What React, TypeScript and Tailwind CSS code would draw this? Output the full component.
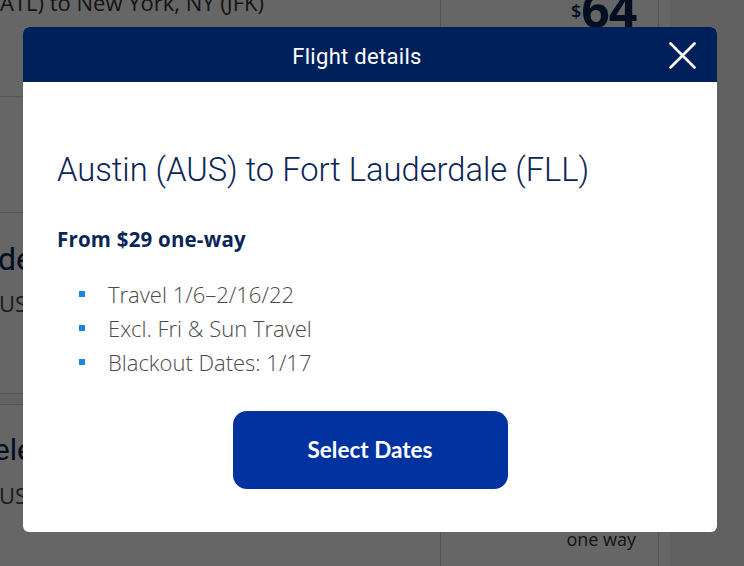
import React from "react";

const bullets = ["Travel 1/6–2/16/22", "Excl. Fri & Sun Travel", "Blackout Dates: 1/17"];

export default function App() {
  return (
    <div className="relative w-[744px] h-[566px] overflow-hidden bg-[#f2f2f2]" style={{ fontFamily: "'Open Sans', sans-serif" }}>
      {/* background page */}
      <div className="flex flex-col w-[670px]">
        <div className="flex h-[97px] bg-white border-b border-[#d6d6d6]">
          <div className="flex-1 pl-0">
            <div className="mt-[-14px] text-[22px] text-[#333] whitespace-nowrap">ATL) to New York, NY (JFK)</div>
          </div>
          <div className="w-[219px] h-full border-x border-[#c8d0dc] flex justify-end pr-[22px]">
            <div className="mt-[-16px] flex items-start text-[#0b2556]">
              <span className="text-[18px] font-semibold mt-[14px]">$</span>
              <span className="text-[50px] font-bold leading-none tracking-tight">64</span>
            </div>
          </div>
          <div className="w-[11px]" />
        </div>
        <div className="h-[116px] bg-white border-b border-[#d6d6d6]" />
        <div className="h-[180px] bg-white flex flex-col justify-start">
          <div className="ml-[-2px] mt-[30px] text-[32px] text-[#0b2556] leading-none whitespace-nowrap" style={{ fontFamily: "Roboto, sans-serif" }}>de</div>
          <div className="ml-[-15px] mt-[12px] text-[22px] text-[#444] whitespace-nowrap">AUS</div>
        </div>
        <div className="h-[12px] bg-[#f7f7f7] border-y border-[#d0d0d0]" />
        <div className="h-[170px] bg-white flex">
          <div className="flex-1">
            <div className="ml-[-24px] mt-[30px] text-[30px] text-[#0b2556] leading-none whitespace-nowrap" style={{ fontFamily: "Roboto, sans-serif" }}>Sele</div>
            <div className="ml-[-15px] mt-[14px] text-[22px] text-[#444] whitespace-nowrap">AUS</div>
          </div>
          <div className="w-[219px] border-x border-[#c8d0dc] flex flex-col justify-end items-end pr-[22px] pb-[22px]">
            <div className="text-[18px] text-[#333]">one way</div>
          </div>
          <div className="w-[11px]" />
        </div>
      </div>

      {/* overlay */}
      <div className="absolute inset-0 bg-black/60" />

      {/* modal */}
      <div className="absolute left-[23px] top-[27px] w-[694px] h-[505px] bg-white rounded-[6px] overflow-hidden flex flex-col">
        <div className="relative h-[55px] bg-[#00205b] flex items-center justify-center shrink-0 pr-[26px]">
          <div className="mt-[4px] text-white text-[22px] tracking-[0.3px]" style={{ fontFamily: "Roboto, sans-serif" }}>Flight details</div>
          <svg className="absolute right-[21px] top-[15px]" width="27" height="27" viewBox="0 0 27 27" fill="none">
            <path d="M1.5 1.5 L25.5 25.5 M25.5 1.5 L1.5 25.5" stroke="white" strokeWidth="2.6" strokeLinecap="round" />
          </svg>
        </div>
        <div className="flex flex-col px-[34px]">
          <h1 className="mt-[68px] text-[32.7px] font-light leading-[40px] text-[#0b2556] whitespace-nowrap" style={{ fontFamily: "Roboto, sans-serif" }}>
            Austin (AUS) to Fort Lauderdale (FLL)
          </h1>
          <div className="mt-[36px] text-[20.5px] font-bold tracking-[0.2px] text-[#0b2556] leading-[26px]">
            From $29 one-way
          </div>
          <ul className="mt-[25px] flex flex-col">
            {bullets.map((b) => (
              <li key={b} className="flex items-center h-[34px]">
                <span className="ml-[22px] w-[6px] h-[6px] bg-[#1b86dc]" />
                <span className="ml-[23px] text-[22px] font-light text-[#4a4a4a]">{b}</span>
              </li>
            ))}
          </ul>
          <div className="flex justify-center mt-[32px]">
            <button className="w-[275px] h-[78px] rounded-[14px] bg-[#0033a0] text-white text-[22.5px] font-bold" style={{ fontFamily: "Lato, sans-serif" }}>
              Select Dates
            </button>
          </div>
        </div>
      </div>
    </div>
  );
}
